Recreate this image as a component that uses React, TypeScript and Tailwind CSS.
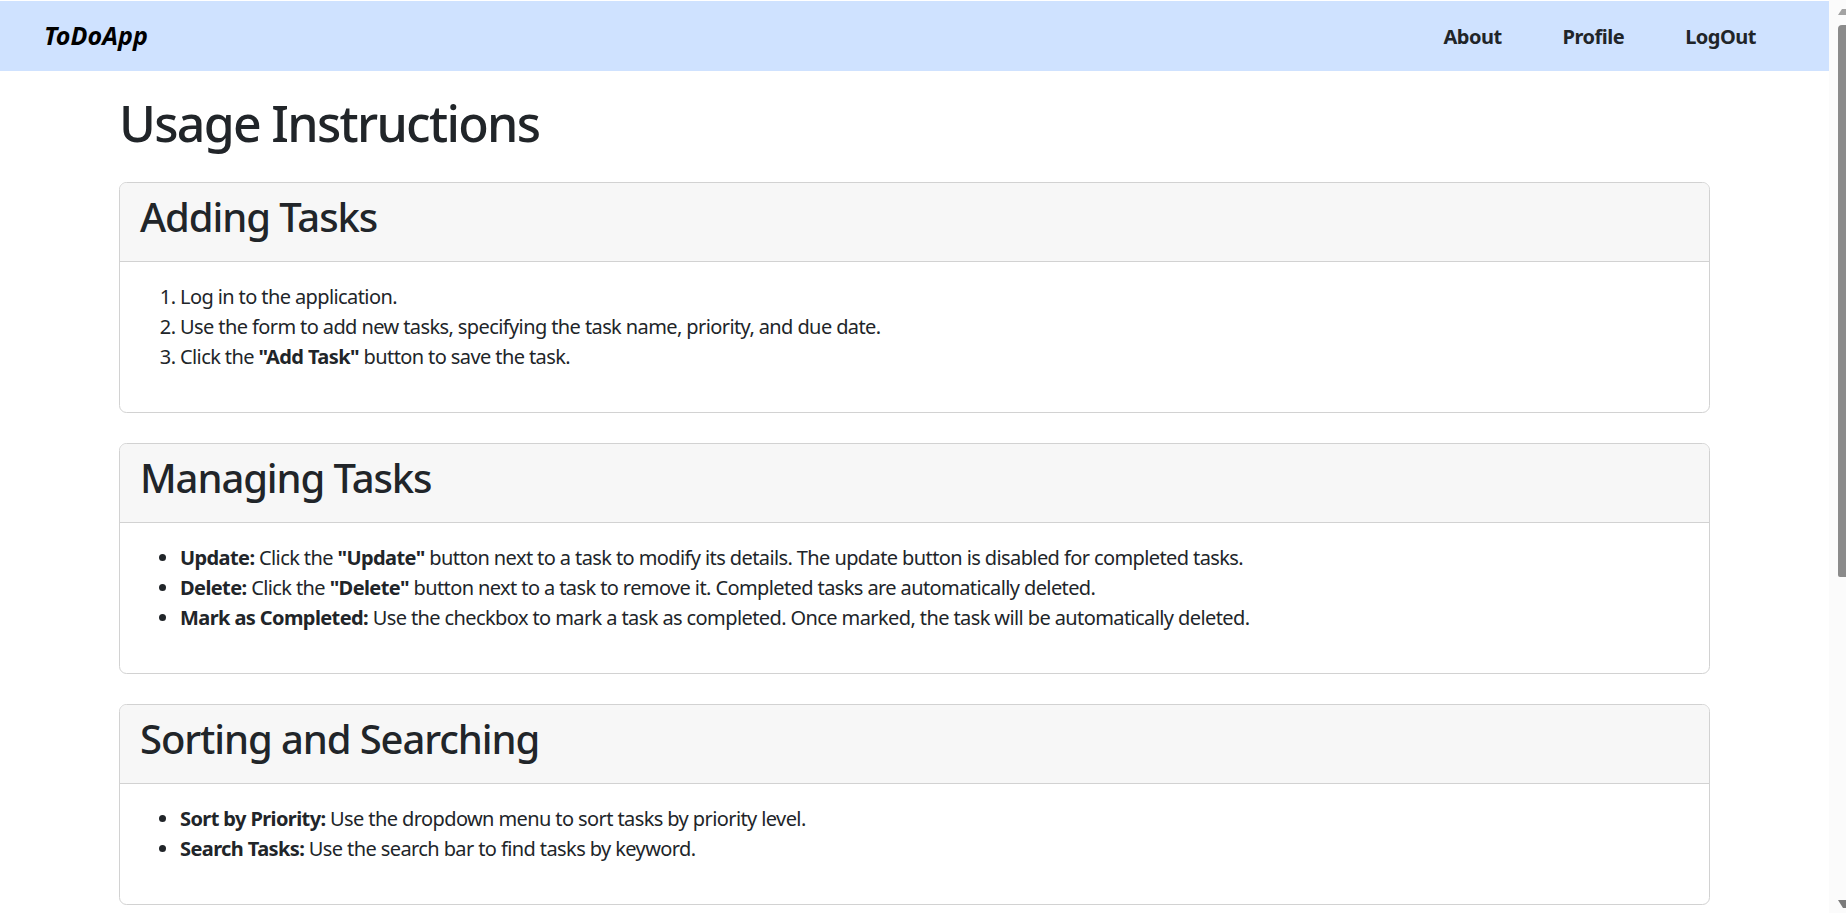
import React from "react";

const font = { fontFamily: '"Noto Sans", "Open Sans", sans-serif' };

function Card({ title, children }: { title: string; children: React.ReactNode }) {
  return (
    <section className="mb-[30px] rounded-[7.5px] border border-[#d2d2d2] bg-white">
      <div className="rounded-t-[6.5px] border-b border-[#d2d2d2] bg-[#f7f7f7] px-[20px] py-[10px]">
        <h2 className="mb-[10px] text-[40px] font-medium leading-[48px] tracking-[-1.1px] text-[#212529]">{title}</h2>
      </div>
      <div className="p-[20px] text-[20px] leading-[30px] tracking-[-0.6px] text-[#212529]">{children}</div>
    </section>
  );
}

export default function App() {
  return (
    <div className="flex h-[913px] w-full overflow-hidden bg-white" style={font}>
      <div className="flex min-w-0 flex-1 flex-col">
        <div className="h-px shrink-0 bg-white" />
        <nav className="flex h-[70px] shrink-0 items-center justify-between bg-[#cfe2ff] pl-[44px] pr-[73px]">
          <span className="text-[25px] font-bold italic tracking-[0.1px] text-black">ToDoApp</span>
          <div className="flex items-center gap-[61px] pt-[2px] text-[20px] font-bold tracking-[-0.5px] text-[#212529]">
            <span>About</span>
            <span>Profile</span>
            <span>LogOut</span>
          </div>
        </nav>
        <main className="mx-auto w-[1591px]">
          <h1 className="mb-[29px] mt-[22px] text-[50px] font-medium leading-[60px] tracking-[-1.7px] text-[#212529]">
            Usage Instructions
          </h1>
          <Card title="Adding Tasks">
            <ol className="mb-[20px] list-decimal pl-[40px]">
              <li>Log in to the application.</li>
              <li>Use the form to add new tasks, specifying the task name, priority, and due date.</li>
              <li>
                Click the <b>"Add Task"</b> button to save the task.
              </li>
            </ol>
          </Card>
          <Card title="Managing Tasks">
            <ul className="mb-[20px] list-disc pl-[40px]">
              <li>
                <b>Update:</b> Click the <b>"Update"</b> button next to a task to modify its details. The update button is
                disabled for completed tasks.
              </li>
              <li>
                <b>Delete:</b> Click the <b>"Delete"</b> button next to a task to remove it. Completed tasks are
                automatically deleted.
              </li>
              <li>
                <b>Mark as Completed:</b> Use the checkbox to mark a task as completed. Once marked, the task will be
                automatically deleted.
              </li>
            </ul>
          </Card>
          <Card title="Sorting and Searching">
            <ul className="mb-[20px] list-disc pl-[40px]">
              <li>
                <b>Sort by Priority:</b> Use the dropdown menu to sort tasks by priority level.
              </li>
              <li>
                <b>Search Tasks:</b> Use the search bar to find tasks by keyword.
              </li>
            </ul>
          </Card>
        </main>
      </div>
      <div className="flex w-[17px] shrink-0 flex-col items-end bg-[#fbfbfb]">
        <svg width="8" height="25" viewBox="0 0 8 25" className="shrink-0">
          <polygon points="0,15 4,9 8,9 8,15" fill="#a3a3a3" />
        </svg>
        <div className="h-[552px] w-[8px] shrink-0 rounded-tl-[4px] rounded-bl-[2px] bg-[#8b8b8b]" />
        <div className="flex-1" />
        <svg width="8" height="13" viewBox="0 0 8 13" className="shrink-0">
          <polygon points="0,0 8,0 8,8 5,8" fill="#7b7b7b" />
        </svg>
      </div>
    </div>
  );
}
